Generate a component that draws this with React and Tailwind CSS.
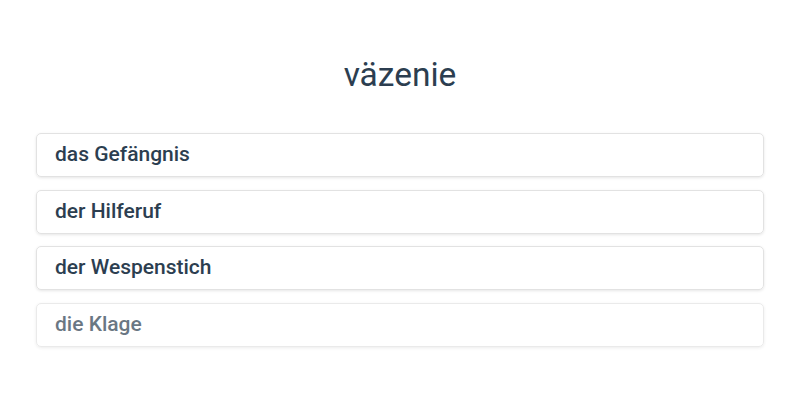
import React from 'react';

const options = ['das Gefängnis', 'der Hilferuf', 'der Wespenstich', 'die Klage'];

export default function App() {
    return (
        <div className="w-[800px] h-[400px] bg-white px-9 pt-[54px] font-['Roboto',sans-serif] text-[#2c3e50]">
            <h1 className="text-center text-[33.5px] leading-[42px]">väzenie</h1>
            <div className="mt-[37px] flex flex-col gap-[12.5px]">
                {options.map((o, i) => (
                    <div
                        key={o}
                        className={
                            'h-[44px] flex items-center px-[18px] rounded-[5px] border border-[#e2e2e2] shadow-[0_1px_3px_rgba(0,0,0,0.1)] text-[21px] font-medium ' +
                            (i === 3 ? 'opacity-70' : '')
                        }
                    >
                        {o}
                    </div>
                ))}
            </div>
        </div>
    );
}
